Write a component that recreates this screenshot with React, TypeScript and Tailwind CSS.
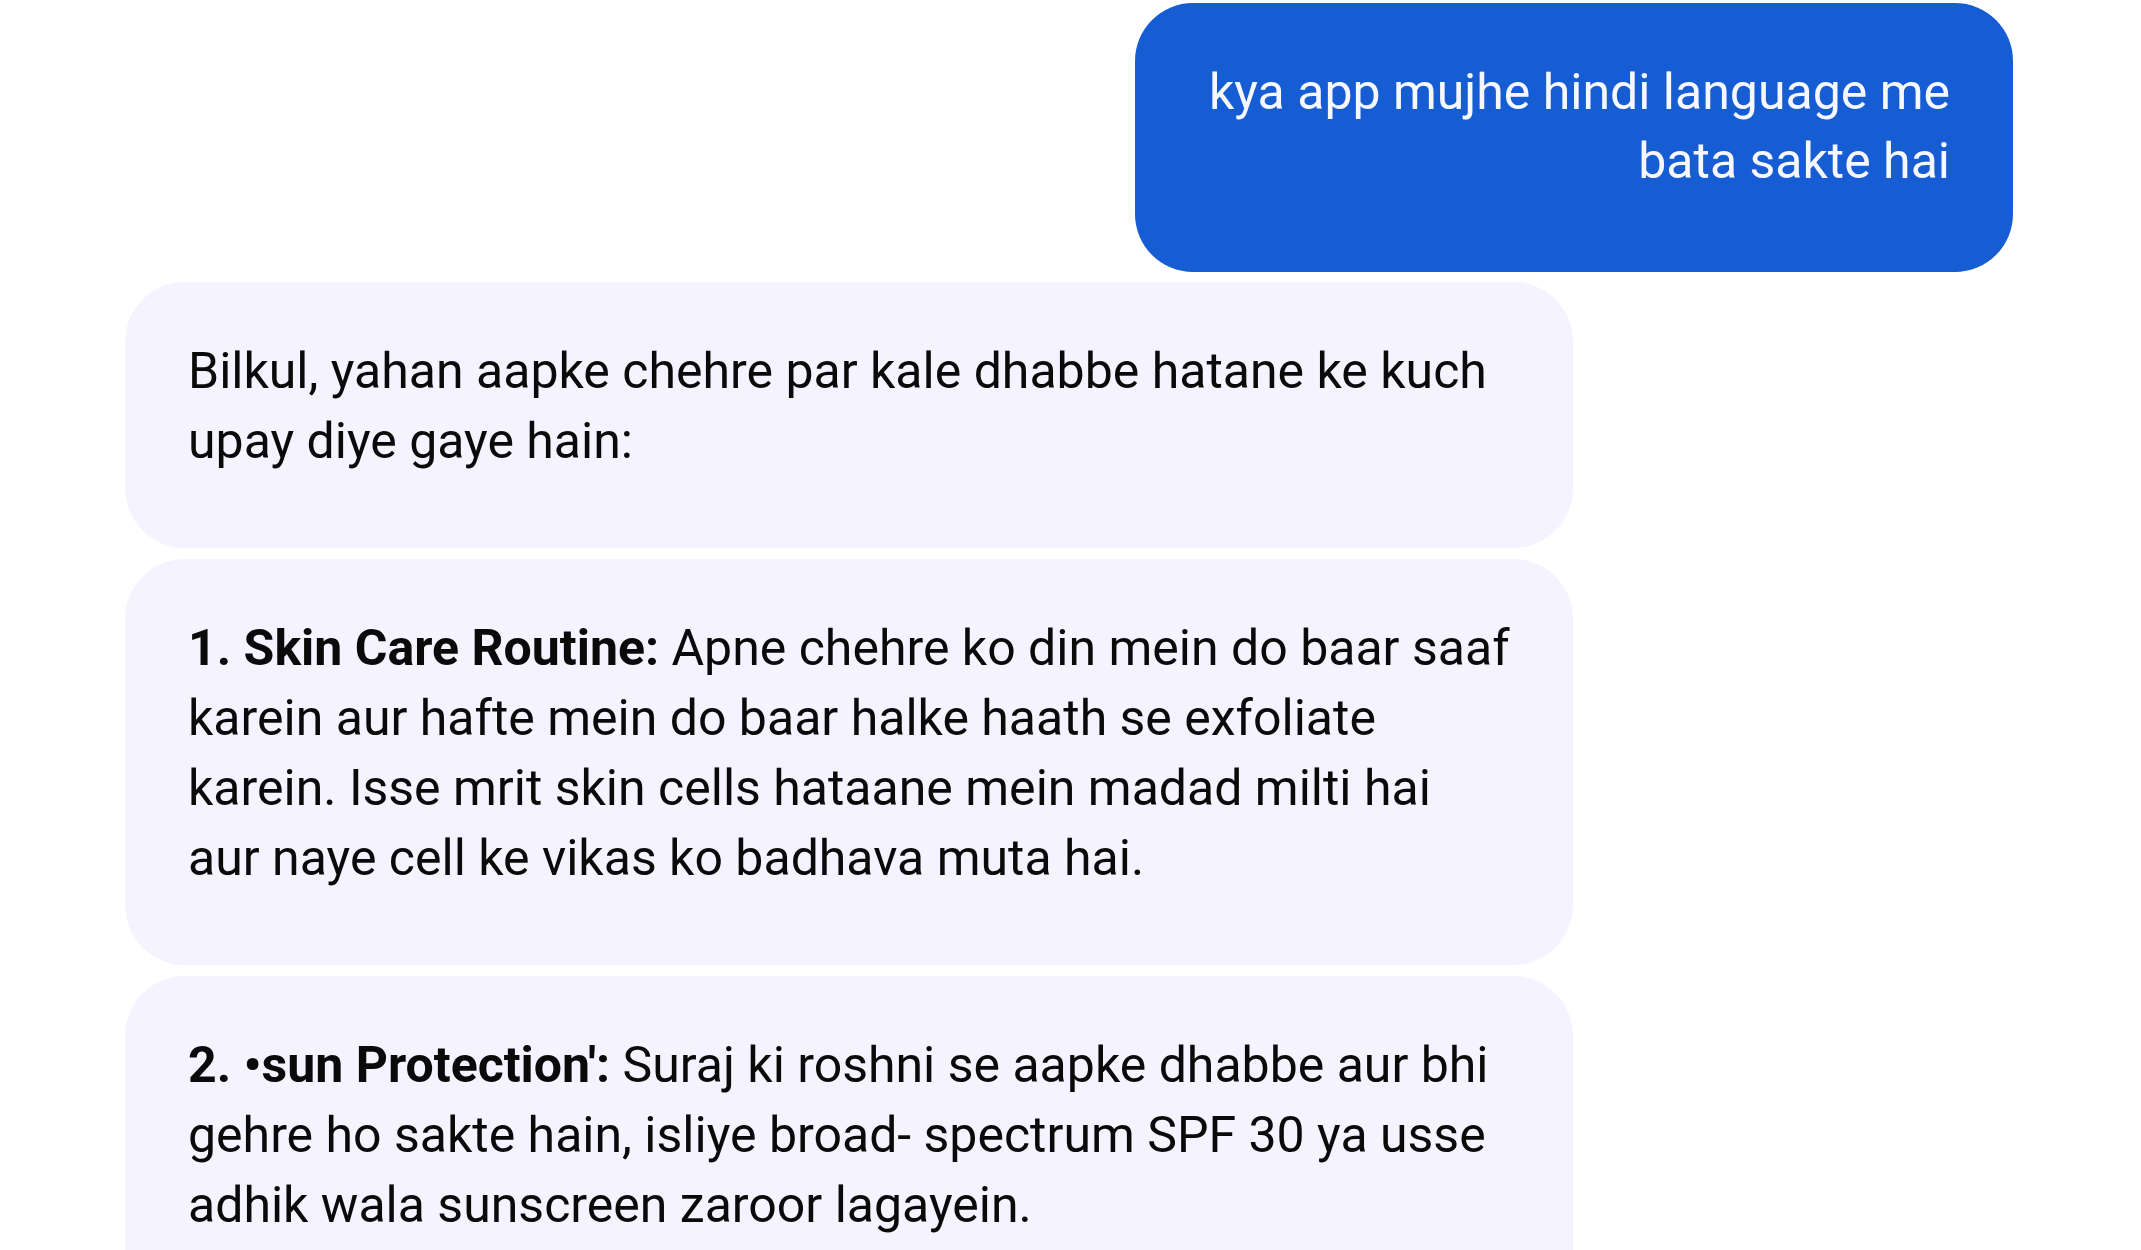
import React from "react";

function AssistantBubble({ children }: { children: React.ReactNode }) {
  return (
    <div className="w-[1448px] rounded-[60px] bg-[#f4f3ff] pl-[63px] pr-[40px] pt-[54px] pb-[72px] text-[50px] leading-[70px] text-[#0a0a0a] whitespace-nowrap">
      {children}
    </div>
  );
}

export default function App() {
  return (
    <div
      className="h-[1250px] w-[2141px] overflow-hidden bg-white"
      style={{ fontFamily: "Roboto, 'Noto Sans', sans-serif" }}
    >
      <div className="flex flex-col pt-[3px]">
        <div className="flex justify-end pr-[128px]">
          <div className="w-[878px] rounded-[58px] bg-[#165cd3] pr-[63px] pl-[40px] pt-[55px] pb-[76px] text-right text-[50px] leading-[69px] text-[#f7f7ff] whitespace-nowrap">
            kya app mujhe hindi language me
            <br />
            bata sakte hai
          </div>
        </div>
        <div className="mt-[10px] flex flex-col gap-[11px] pl-[125px]">
          <AssistantBubble>
            Bilkul, yahan aapke chehre par kale dhabbe hatane ke kuch
            <br />
            upay diye gaye hain:
          </AssistantBubble>
          <AssistantBubble>
            <span className="font-bold">1. Skin Care Routine:</span> Apne chehre ko din mein do baar saaf
            <br />
            karein aur hafte mein do baar halke haath se exfoliate
            <br />
            karein. Isse mrit skin cells hataane mein madad milti hai
            <br />
            aur naye cell ke vikas ko badhava muta hai.
          </AssistantBubble>
          <AssistantBubble>
            <span className="font-bold">2. •sun Protection':</span> Suraj ki roshni se aapke dhabbe aur bhi
            <br />
            gehre ho sakte hain, isliye broad- spectrum SPF 30 ya usse
            <br />
            adhik wala sunscreen zaroor lagayein.
          </AssistantBubble>
        </div>
      </div>
    </div>
  );
}
